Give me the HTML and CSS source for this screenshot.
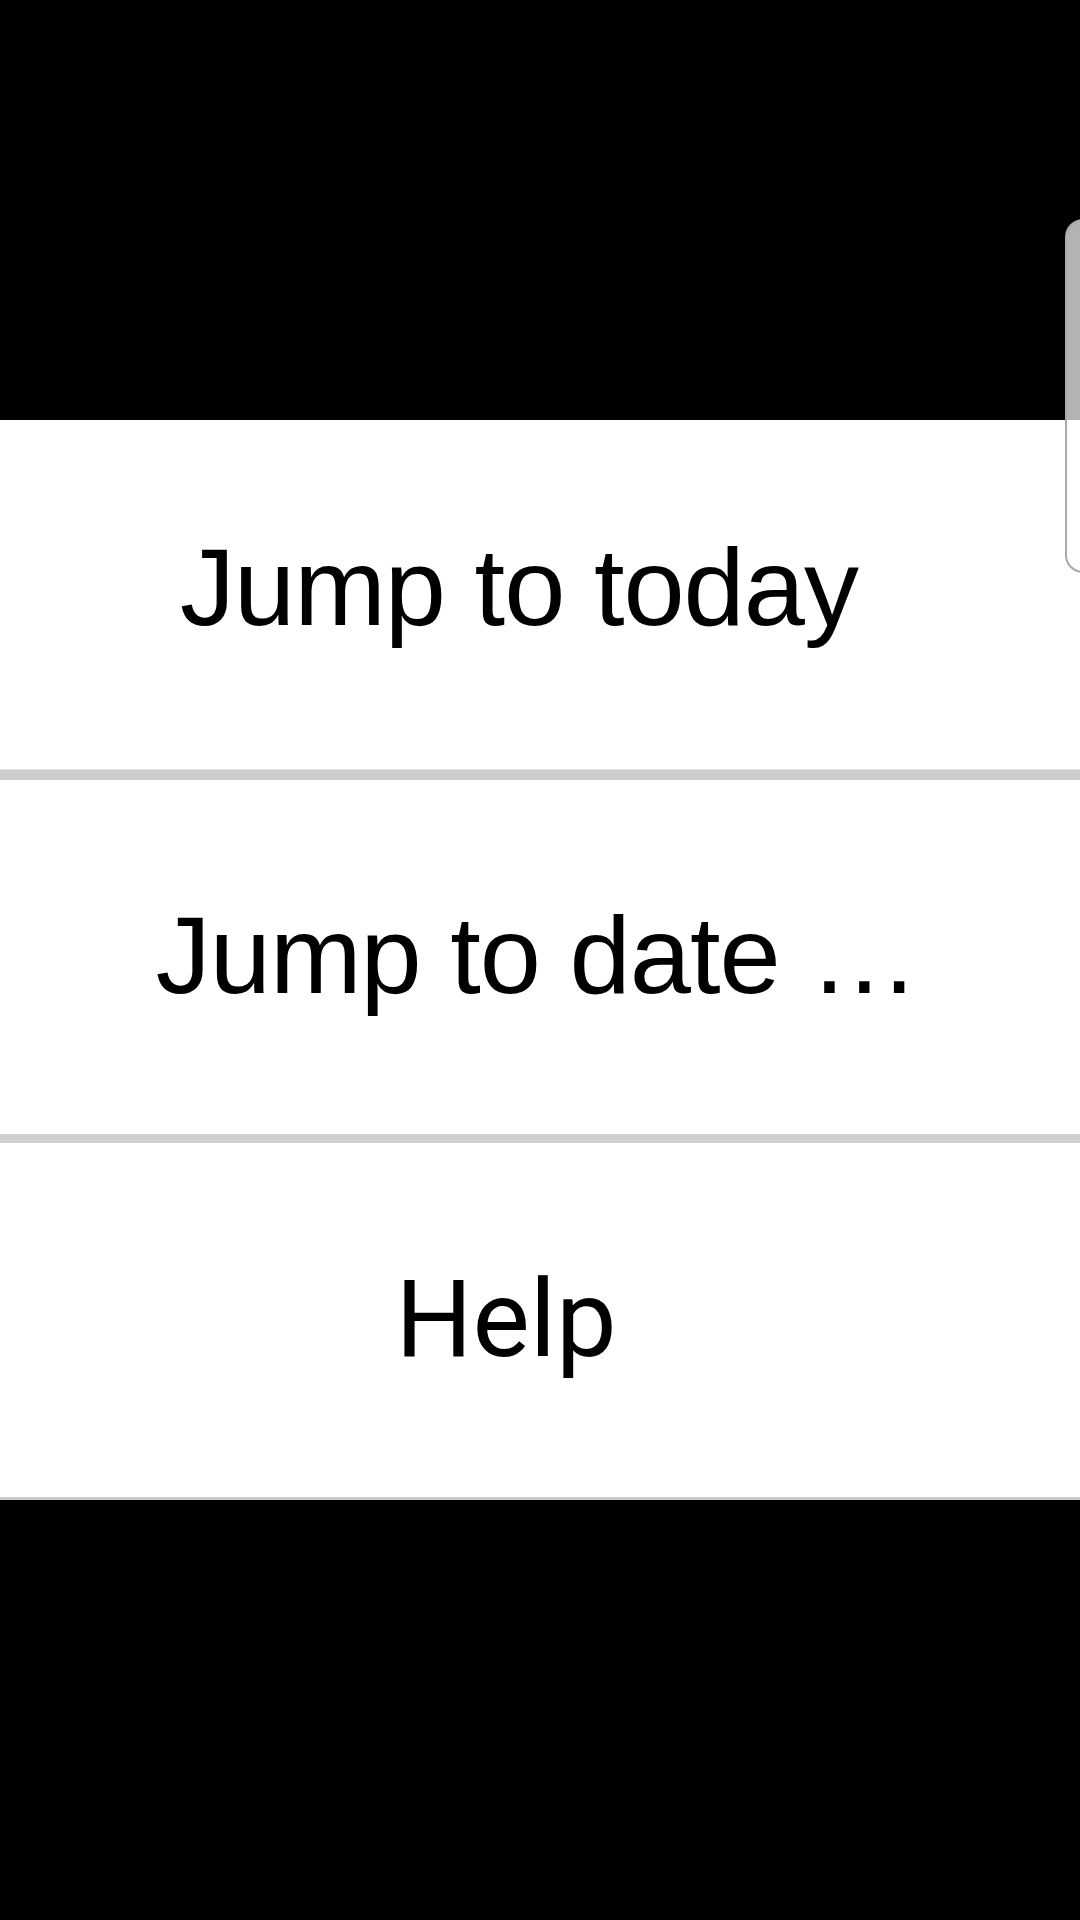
FILE: index.html
```html
<!DOCTYPE html>
<html lang="en">
<head>
<meta charset="utf-8">
<title>Menu</title>
<link rel="stylesheet" href="styles.css">
</head>
<body>
<div class="screen">
  <div class="backdrop-top"></div>
  <ul class="menu">
    <li class="menu-item item-today">Jump to today</li>
    <li class="menu-item item-date">Jump to date …</li>
    <li class="menu-item item-help">Help</li>
  </ul>
  <div class="backdrop-bottom"></div>
  <div class="edge-handle"></div>
</div>
</body>
</html>
```

FILE: styles.css
```css
html, body {
  margin: 0;
  padding: 0;
  background: #000;
}

.screen {
  position: relative;
  width: 1080px;
  height: 1920px;
  overflow: hidden;
  display: flex;
  flex-direction: column;
  background: #000;
}

.backdrop-top {
  height: 420px;
  flex: none;
}

.menu {
  list-style: none;
  margin: 0;
  padding: 0;
  background: #fff;
  border-bottom: 3px solid #cccccc;
}

.menu-item {
  display: flex;
  align-items: center;
  justify-content: center;
  box-sizing: border-box;
  color: #000;
  font-family: "Liberation Sans", Arial, sans-serif;
  font-size: 110px;
  letter-spacing: -1px;
  line-height: normal;
  white-space: nowrap;
}

.item-today {
  height: 360px;
  padding: 0 42px 18px 0;
  border-bottom: 10px solid #cdcdcd;
  box-shadow: inset 0 -11px 0 -10px #e3e3e3;
}

.item-date {
  height: 363px;
  padding: 0 6px 6px 0;
  border-bottom: 9px solid #d0d0d0;
}

.item-help {
  height: 354px;
  font-family: Roboto, "Noto Sans", sans-serif;
  font-size: 108px;
  letter-spacing: 0;
  padding: 0 68px 2px 0;
}

.backdrop-bottom {
  flex: 1;
}

.edge-handle {
  position: absolute;
  top: 219px;
  left: 1065px;
  width: 40px;
  height: 354px;
  box-sizing: border-box;
  border: 2px solid #a9a9a9;
  border-radius: 18px;
  background: rgba(255, 255, 255, 0.7);
}
```
